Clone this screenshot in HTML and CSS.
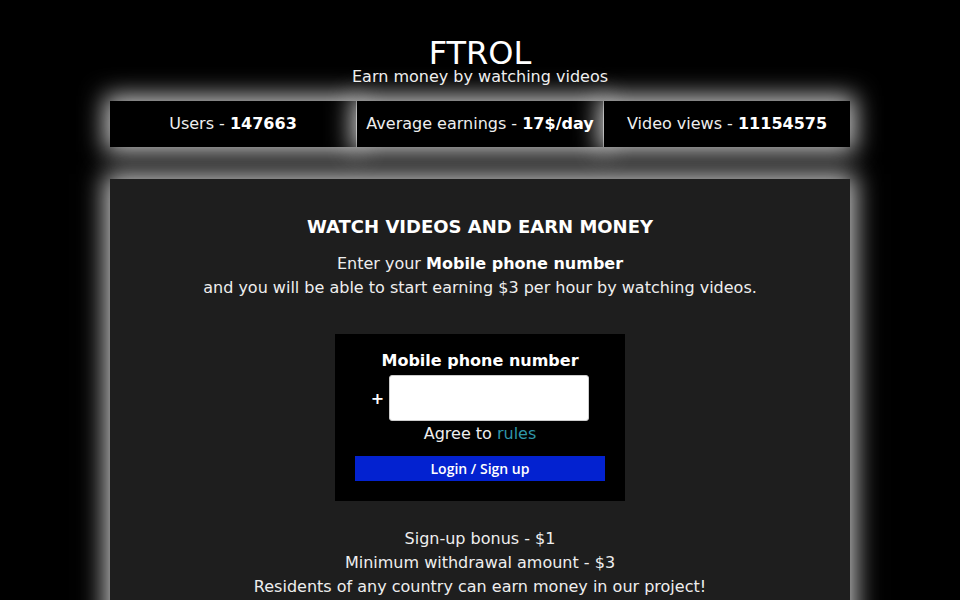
FILE: index.html
```html
<!DOCTYPE html>
<html>
<head>
<meta charset="utf-8">
<title>FTROL</title>
<link rel="stylesheet" href="styles.css">
</head>
<body>
<div class="page">
  <header class="header">
    <h1 class="title">FTROL</h1>
    <p class="subtitle">Earn money by watching videos</p>
  </header>
  <div class="stats">
    <div class="stat">Users - <b>147663</b></div>
    <div class="stat">Average earnings - <b>17$/day</b></div>
    <div class="stat">Video views - <b>11154575</b></div>
  </div>
  <main class="panel">
    <h2 class="headline">WATCH VIDEOS AND EARN MONEY</h2>
    <p class="intro">Enter your <b>Mobile phone number</b><br>and you will be able to start earning $3 per hour by watching videos.</p>
    <form class="form">
      <div class="form-label">Mobile phone number</div>
      <div class="phone-row">
        <span class="plus">+</span>
        <input class="phone-input" type="text">
      </div>
      <div class="agree">Agree to <a class="rules" href="#">rules</a></div>
      <button class="submit" type="button">Login / Sign up</button>
    </form>
    <p class="info">Sign-up bonus - $1<br>Minimum withdrawal amount - $3<br>Residents of any country can earn money in our project!</p>
  </main>
</div>
</body>
</html>
```

FILE: styles.css
```css
html, body {
  margin: 0;
  padding: 0;
  background: #000;
  color: #eee;
  font-family: "DejaVu Sans", sans-serif;
  overflow: hidden;
}
.page {
  width: 740px;
  margin: 0 auto;
}
.header {
  text-align: center;
  padding-top: 37px;
}
.title {
  margin: 0;
  font-size: 32px;
  line-height: 32px;
  font-weight: normal;
  color: #fff;
}
.subtitle {
  margin: -1px 0 0;
  font-size: 16px;
  line-height: 17px;
  color: #eee;
}
.stats {
  margin-top: 16px;
  display: flex;
  gap: 1px;
}
.stat {
  flex: 1;
  background: #000;
  height: 46px;
  line-height: 46px;
  text-align: center;
  font-size: 16px;
  color: #eee;
  box-shadow: 0 0 24px 5px rgba(255, 255, 255, 0.8);
}
.stat b {
  color: #fff;
}
.panel {
  margin-top: 32px;
  background: #1e1e1e;
  box-shadow: 0 0 24px 5px rgba(255, 255, 255, 0.8);
  padding: 37px 20px 30px;
  text-align: center;
  min-height: 500px;
}
.headline {
  margin: 0;
  font-size: 18px;
  line-height: 22px;
  font-weight: bold;
  color: #fff;
}
.intro {
  margin: 14px 0 0;
  font-size: 16px;
  line-height: 24px;
}
.intro b {
  color: #fff;
}
.form {
  width: 290px;
  margin: 34px auto 0;
  background: #000;
  padding: 17px 20px 20px;
  box-sizing: border-box;
}
.form-label {
  font-size: 16px;
  line-height: 20px;
  font-weight: bold;
  color: #fff;
}
.phone-row {
  margin-top: 4px;
  display: flex;
  justify-content: center;
  align-items: center;
  gap: 5px;
}
.plus {
  font-weight: bold;
  font-size: 16px;
  color: #fff;
}
.phone-input {
  width: 200px;
  height: 46px;
  box-sizing: border-box;
  border: 1px solid #ccc;
  border-radius: 3px;
  background: #fff;
  margin: 0;
  padding: 0 8px;
}
.agree {
  margin-top: 3px;
  font-size: 16px;
  line-height: 20px;
}
.rules {
  color: #2f96a8;
  text-decoration: none;
}
.submit {
  display: block;
  width: 250px;
  height: 25px;
  margin: 12px auto 0;
  border: none;
  background: #0322d0;
  color: #fff;
  font-family: "Open Sans", sans-serif;
  font-weight: 600;
  font-size: 14px;
  padding: 0;
}
.info {
  margin: 26px 0 0;
  font-size: 16px;
  line-height: 24px;
}
```
